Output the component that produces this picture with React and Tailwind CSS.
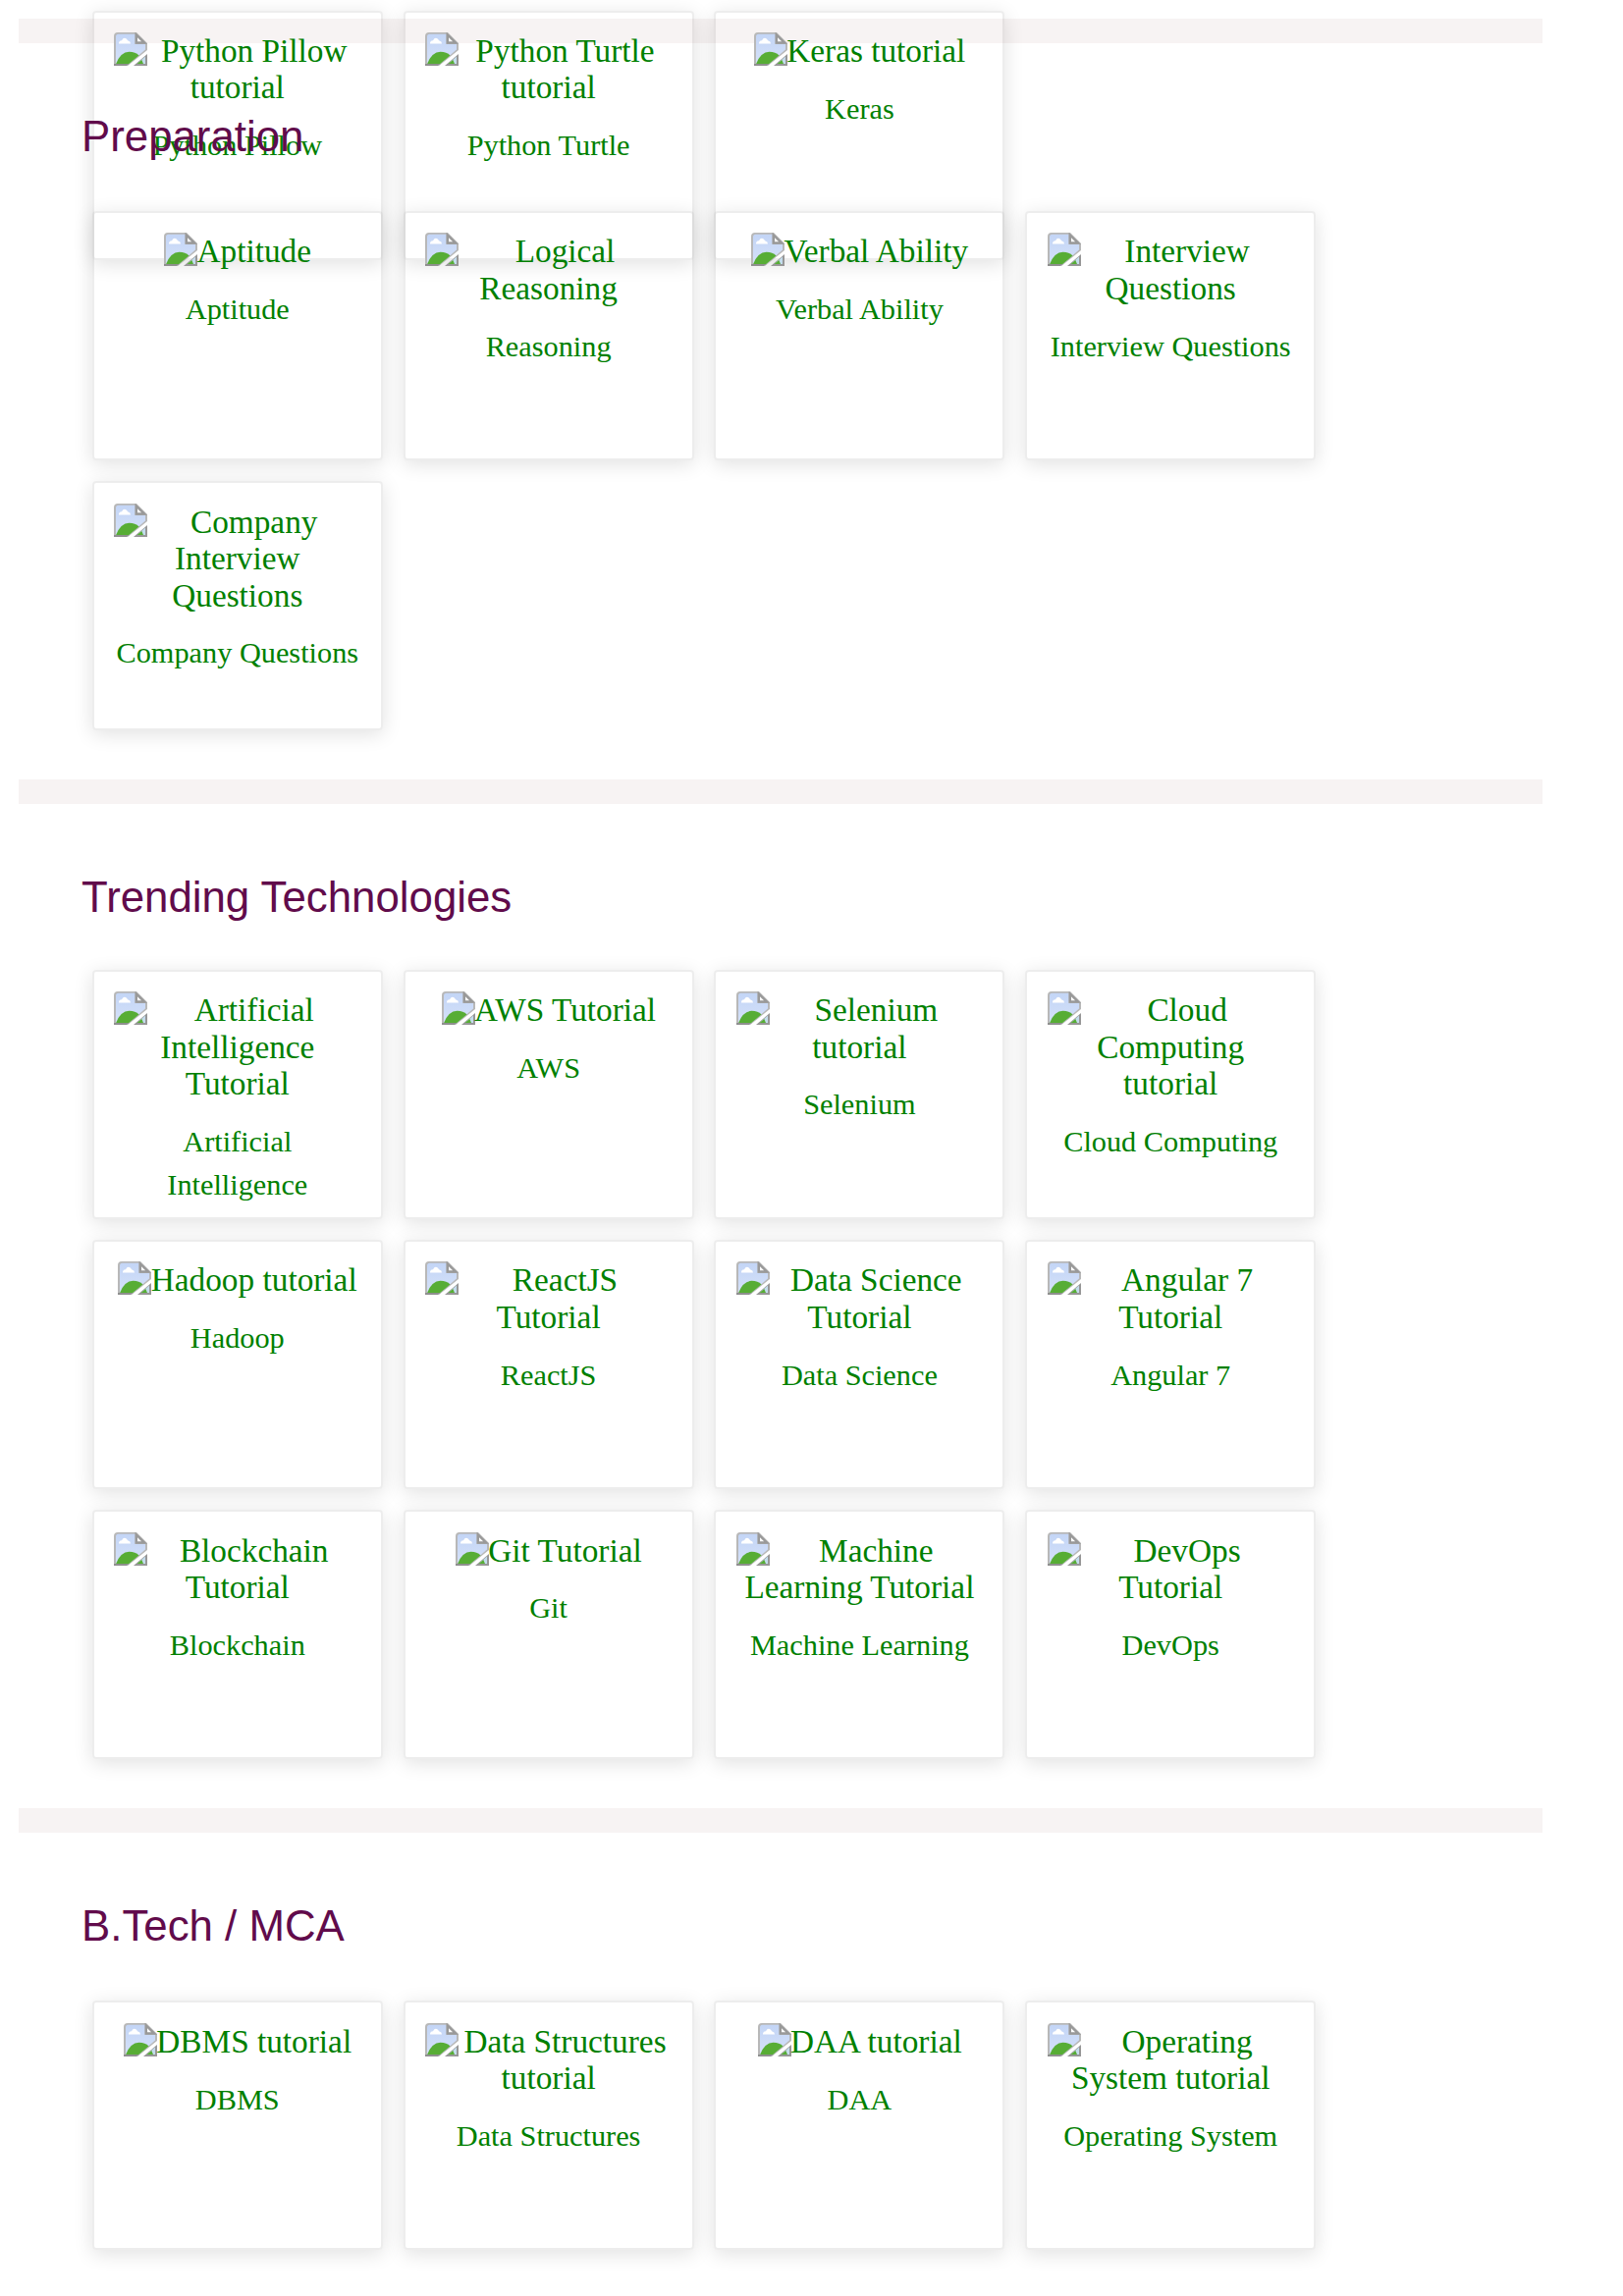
function BrokenImageIcon() {
  return (
    <svg className="float-left mr-[-0.7px] ml-[0.5px] h-[34px] w-[34px]" viewBox="0 0 34 34" aria-hidden="true">
      <defs>
        <linearGradient id="sky" x1="0" y1="0" x2="0" y2="1">
          <stop offset="0" stopColor="#c3d5f6" />
          <stop offset="1" stopColor="#d6e2f9" />
        </linearGradient>
      </defs>
      <path d="M4 0H23L34 11V18L14 34H0V4Q0 0 4 0Z" fill="#b8b8b8" />
      <path d="M4.500 1.800H21.500V12H32V17.500L13 34L2 32.200V4.500Q2 1.800 4.500 1.800Z" fill="url(#sky)" />
      <path d="M5 11.500Q4.800 8.600 8 8.300Q10 4.300 13 6.800Q14 8.300 14.500 8.500Q17 9 17 11.500Z" fill="#fff" />
      <path d="M2 32.200Q7 19.800 15.500 19.800Q22 19.800 25.500 23.500L15 32.200Z" fill="#57ad35" />
      <path d="M0 32H15.500L13 34H0Z" fill="#8f8f8f" />
      <path d="M22.800 2.500V10.500H31Z" fill="#fff" stroke="#999" strokeWidth="2.400" />
      <path d="M34 22V34H20Z" fill="#979797" />
      <path d="M32 24.500V32H23.500Z" fill="#c3dcec" />
      <path d="M23.500 32L28.300 28L30 32Z" fill="#57ad35" />
    </svg>
  );
}

function Card({ alt, label }) {
  return (
    <a className="block h-[254px] w-[296px] rounded-[4px] border-2 border-black/[0.07] px-5 pt-[20.4px] text-center text-[#008000] shadow-[0_4px_20px_rgba(0,0,0,0.12)]">
      <span className="mx-auto block w-fit max-w-full text-[33.3px] leading-[37.5px]">
        <BrokenImageIcon />
        {alt}
      </span>
      <p className="mt-[18.2px] text-[30.3px] leading-[44px]">{label}</p>
    </a>
  );
}

function CardGrid({ items }) {
  return (
    <div className="relative z-10 ml-[93.8px] grid grid-cols-[repeat(4,296px)] gap-x-[20.8px] gap-y-[21.2px]">
      {items.map(([alt, label]) => (
        <Card key={label} alt={alt} label={label} />
      ))}
    </div>
  );
}

function Section({ title, items, className, titleHeight }) {
  return (
    <section className={className}>
      <hr className="ml-[19px] h-[25px] w-[1552px] border-0 bg-[#f7f3f3]" />
      <h2
        className={`relative z-20 ml-[83px] pt-[70px] font-['Liberation_Sans',Arial,sans-serif] text-[43.8px] leading-[50px] text-[#610b4b] ${titleHeight}`}
      >
        {title}
      </h2>
      <CardGrid items={items} />
    </section>
  );
}

const python = [
  ["Python Pillow tutorial", "Python Pillow"],
  ["Python Turtle tutorial", "Python Turtle"],
  ["Keras tutorial", "Keras"],
];

const preparation = [
  ["Aptitude", "Aptitude"],
  ["Logical Reasoning", "Reasoning"],
  ["Verbal Ability", "Verbal Ability"],
  ["Interview Questions", "Interview Questions"],
  ["Company Interview Questions", "Company Questions"],
];

const trending = [
  ["Artificial Intelligence Tutorial", "Artificial Intelligence"],
  ["AWS Tutorial", "AWS"],
  ["Selenium tutorial", "Selenium"],
  ["Cloud Computing tutorial", "Cloud Computing"],
  ["Hadoop tutorial", "Hadoop"],
  ["ReactJS Tutorial", "ReactJS"],
  ["Data Science Tutorial", "Data Science"],
  ["Angular 7 Tutorial", "Angular 7"],
  ["Blockchain Tutorial", "Blockchain"],
  ["Git Tutorial", "Git"],
  ["Machine Learning Tutorial", "Machine Learning"],
  ["DevOps Tutorial", "DevOps"],
];

const btech = [
  ["DBMS tutorial", "DBMS"],
  ["Data Structures tutorial", "Data Structures"],
  ["DAA tutorial", "DAA"],
  ["Operating System tutorial", "Operating System"],
];

export default function App() {
  return (
    <main className="h-[2339px] w-[1653px] overflow-hidden bg-white pt-[10.5px] font-['Liberation_Serif','Times_New_Roman',serif]">
      <CardGrid items={python} />
      <Section title="Preparation" items={preparation} className="-mt-[245.5px]" titleHeight="h-[171px]" />
      <Section title="Trending Technologies" items={trending} className="mt-[49.8px]" titleHeight="h-[168.9px]" />
      <Section title="B.Tech / MCA" items={btech} className="mt-[49.7px]" titleHeight="h-[171.5px]" />
    </main>
  );
}
